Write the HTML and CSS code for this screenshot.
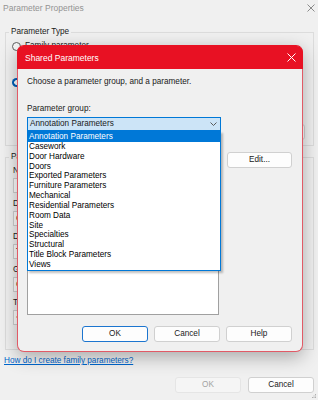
FILE: index.html
```html
<!DOCTYPE html>
<html lang="en">
<head>
  <meta charset="UTF-8" />
  <meta name="viewport" content="width=device-width, initial-scale=1.0"/>
  <title>Parameter Properties</title>
  <link rel="stylesheet" href="styles.css">
</head>
<body>

  <div class="window">
    <div class="titlebar">
      <span class="title">Parameter Properties</span>
      <svg class="close" width="8" height="8" viewBox="0 0 8 8"><path d="M0.5 0.5L7.5 7.5M7.5 0.5L0.5 7.5" stroke="#8a8a8a" stroke-width="1"/></svg>
    </div>

    <fieldset class="group type-group">
      <legend>Parameter Type</legend>
      <div class="radio-row"><span class="radio"></span>Family parameter</div>
      <div class="hint">(Cannot appear in schedules or tags)</div>
      <div class="radio-row"><span class="radio checked"></span>Shared parameter</div>
      <div class="hint">(Can be shared by multiple projects and families, exported<br>to ODBC, and appear in schedules and tags)</div>
      <div class="type-buttons">
        <button class="btn small">Select...</button>
        <button class="btn small">Export...</button>
      </div>
    </fieldset>

    <fieldset class="group data-group">
      <legend>Parameter Data</legend>
      <div class="field"><label>Name:</label><div class="input"></div></div>
      <div class="field"><label>Discipline:</label><div class="input">Common</div></div>
      <div class="field"><label>Data type:</label><div class="input">Text</div></div>
      <div class="field"><label>Group parameter under:</label><div class="input">Constraints</div></div>
      <div class="field"><label>Tooltip Description:</label><div class="input muted">&lt;No tooltip description. Edit this...&gt;</div></div>
    </fieldset>

    <a class="help-link" href="#">How do I create family parameters?</a>

    <div class="footer">
      <button class="btn" disabled>OK</button>
      <button class="btn">Cancel</button>
    </div>

    <svg class="grip" width="5" height="5" viewBox="0 0 5 5">
      <rect x="3" y="0" width="1" height="1" fill="#b0b0b0"/>
      <rect x="1.5" y="1.5" width="1" height="1" fill="#b0b0b0"/>
      <rect x="3" y="1.5" width="1" height="1" fill="#b0b0b0"/>
      <rect x="0" y="3" width="1" height="1" fill="#b0b0b0"/>
      <rect x="1.5" y="3" width="1" height="1" fill="#b0b0b0"/>
      <rect x="3" y="3" width="1" height="1" fill="#b0b0b0"/>
    </svg>
  </div>

  <div class="dialog">
    <div class="dialog-title">
      <span>Shared Parameters</span>
      <svg width="9" height="9" viewBox="0 0 9 9"><path d="M0.5 0.5L8.5 8.5M8.5 0.5L0.5 8.5" stroke="#fff" stroke-width="1"/></svg>
    </div>

    <div class="dialog-body">
      <p class="prompt">Choose a parameter group, and a parameter.</p>

      <div class="label">Parameter group:</div>
      <div class="combo-wrap">
        <div class="combo">
          <span>Annotation Parameters</span>
          <svg width="7" height="4" viewBox="0 0 7 4"><path d="M0.5 0.5L3.5 3.5L6.5 0.5" fill="none" stroke="#5a5a5a" stroke-width="1"/></svg>
        </div>
        <ul class="dropdown">
          <li class="selected">Annotation Parameters</li>
          <li>Casework</li>
          <li>Door Hardware</li>
          <li>Doors</li>
          <li>Exported Parameters</li>
          <li>Furniture Parameters</li>
          <li>Mechanical</li>
          <li>Residential Parameters</li>
          <li>Room Data</li>
          <li>Site</li>
          <li>Specialties</li>
          <li>Structural</li>
          <li>Title Block Parameters</li>
          <li>Views</li>
        </ul>
      </div>

      <div class="label params-label">Parameters:</div>
      <div class="params-row">
        <div class="listbox"></div>
        <button class="btn edit">Edit...</button>
      </div>

      <div class="actions">
        <button class="btn default">OK</button>
        <button class="btn">Cancel</button>
        <button class="btn">Help</button>
      </div>
    </div>
  </div>

</body>
</html>
```

FILE: styles.css
```css
* {
  box-sizing: border-box;
}
body {
  margin: 0;
  width: 318px;
  height: 400px;
  overflow: hidden;
  position: relative;
  background: #f0f0f0;
  font-family: "Liberation Sans", Arial, sans-serif;
  font-size: 8.2px;
  line-height: 12px;
  color: #1a1a1a;
}
.window {
  position: relative;
  height: 400px;
}
.titlebar {
  height: 16px;
  display: flex;
  align-items: center;
  justify-content: space-between;
  padding: 0 3px 0 3px;
}
.title {
  font-size: 8.5px;
  color: #939393;
}
.group {
  margin: 0 4px 0 5px;
  border: 1px solid #dcdcdc;
  min-width: 0;
}
.group legend {
  padding: 0 2px;
  line-height: 12px;
}
.type-group {
  margin-top: 10px;
  padding: 2px 8px 5px 6px;
}
.type-group legend {
  margin-left: -3px;
}
.radio-row {
  display: flex;
  align-items: center;
  gap: 4px;
}
.radio {
  width: 9px;
  height: 9px;
  border-radius: 50%;
  border: 1px solid #5f5f5f;
  background: #f9f9f9;
}
.radio.checked {
  border: none;
  background: radial-gradient(circle, #fff 0 2px, #005fb8 2.6px);
}
.hint {
  padding-left: 13px;
  margin-bottom: 12px;
}
.hint:last-of-type {
  margin-bottom: 0;
}
.type-buttons {
  display: flex;
  justify-content: flex-end;
  gap: 6px;
  margin-top: 12px;
}
.data-group {
  margin-top: 5px;
  padding: 2px 8px 24px 7px;
}
.data-group legend {
  margin-left: -4px;
}
.field label {
  display: block;
  margin-bottom: 1px;
}
.input {
  width: 140px;
  height: 15px;
  margin-bottom: 5px;
  padding-left: 2px;
  border: 1px solid #cfcfcf;
  background: #fdfdfd;
  line-height: 13px;
}
.field:last-child .input {
  margin-bottom: 0;
}
.input.muted {
  color: #808080;
}
.help-link {
  display: block;
  width: max-content;
  margin: 5px 0 0 4px;
  color: #0066cc;
  text-decoration: underline;
}
.footer {
  display: flex;
  justify-content: flex-end;
  gap: 7px;
  margin-top: 10px;
  padding-right: 4px;
}
.footer .btn {
  width: 66px;
}
.grip {
  position: absolute;
  right: 1px;
  bottom: 1px;
}
.btn {
  height: 16px;
  padding: 0;
  border: 1px solid #d0d0d0;
  border-radius: 3px;
  background: #fdfdfd;
  font: inherit;
  line-height: 14px;
  color: #1a1a1a;
}
.btn:disabled {
  color: #a3a3a3;
  background: #f5f5f5;
  border-color: #e5e5e5;
}
.btn.small {
  width: 60px;
}
.btn.default {
  border-color: #1c75cf;
}

/* shared parameters dialog, on top of the properties window */
.dialog {
  position: absolute;
  left: 17px;
  top: 45px;
  width: 286px;
  background: #f0f0f0;
  border: 1px solid #e15a66;
  border-top-color: #e81123;
  border-radius: 7px;
  box-shadow: 0 5px 18px rgba(0,0,0,0.3);
}
.dialog-title {
  height: 23px;
  margin: 0 -1px;
  padding: 0 7px 0 8px;
  display: flex;
  align-items: center;
  justify-content: space-between;
  background: #e81123;
  color: #fff;
  font-size: 8.5px;
  border-radius: 6px 6px 0 0;
}
.dialog-body {
  padding: 7px 10px 9px 9px;
}
.prompt {
  margin: 0 0 15px;
}
.label {
  margin-bottom: 2px;
}
.combo-wrap {
  position: relative;
  width: 194px;
}
.combo {
  height: 14px;
  padding: 0 3px 0 2px;
  display: flex;
  align-items: center;
  justify-content: space-between;
  border: 1px solid #0078d7;
  background: #cce4f7;
}
.dropdown {
  position: absolute;
  top: 100%;
  left: 0;
  z-index: 1;
  width: 194px;
  margin: 0;
  padding: 0;
  list-style: none;
  background: #fff;
  border: 1px solid #0078d7;
  box-shadow: 2px 2px 2px rgba(0,0,0,0.25);
}
.dropdown li {
  height: 9.85px;
  line-height: 10px;
  padding-left: 1px;
  white-space: nowrap;
  color: #000;
}
.dropdown li.selected {
  background: #0078d7;
  color: #fff;
}
.params-label {
  margin-top: 6px;
  margin-bottom: 3px;
}
.params-row {
  display: flex;
  justify-content: space-between;
  align-items: flex-start;
}
.listbox {
  width: 192px;
  height: 163px;
  background: #fff;
  border: 1px solid #a0a0a0;
}
.btn.edit {
  width: 65px;
}
.actions {
  display: flex;
  justify-content: flex-end;
  gap: 6px;
  margin-top: 11px;
}
.actions .btn {
  width: 66px;
}
```
